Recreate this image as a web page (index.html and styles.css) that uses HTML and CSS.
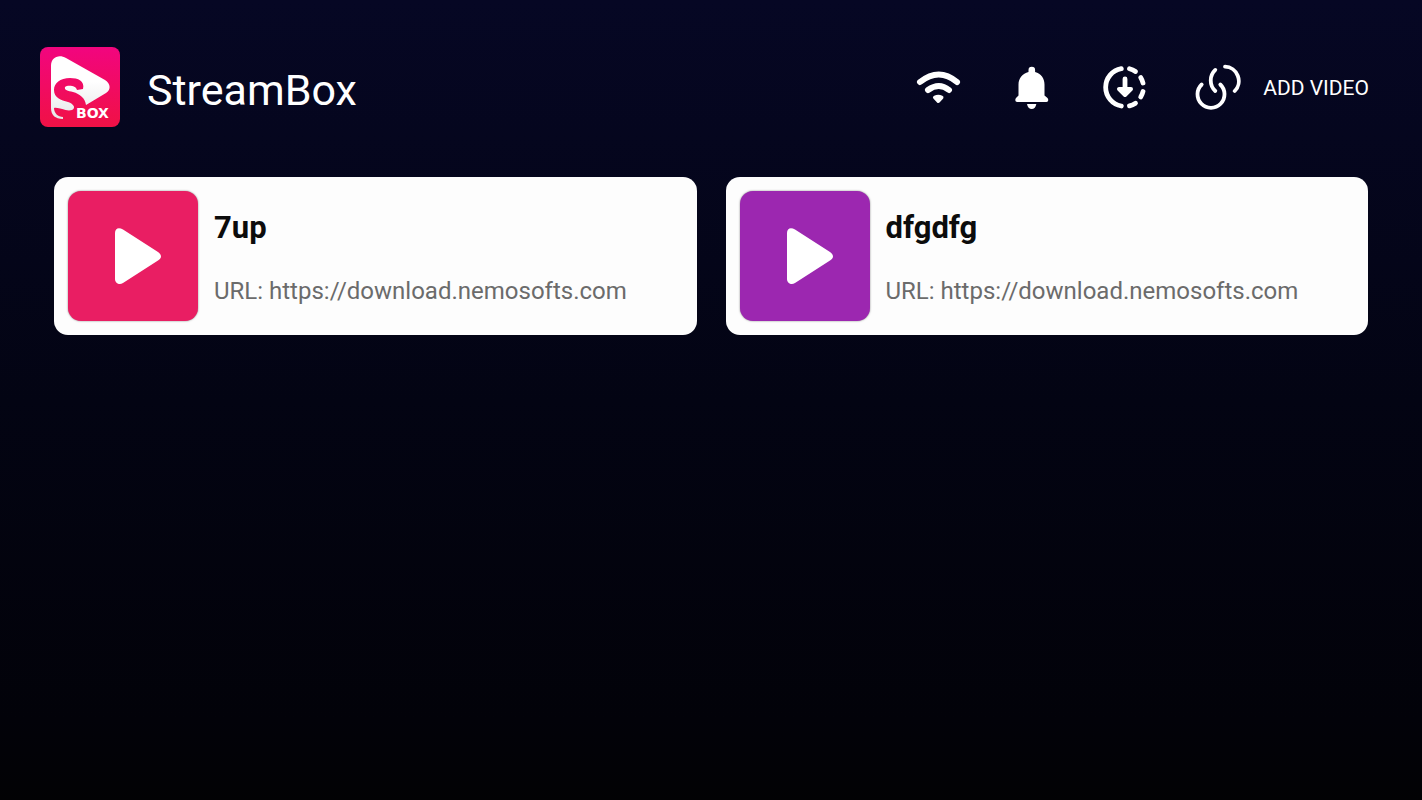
FILE: index.html
```html
<!DOCTYPE html>
<html lang="en">
<head>
    <meta charset="UTF-8">
    <meta name="viewport" content="width=device-width, initial-scale=1.0">
    <title>StreamBox</title>
    <link rel="stylesheet" href="styles.css">
</head>
<body>
    <header class="header">
        <div class="brand">
            <svg class="logo" viewBox="0 0 80 80" aria-hidden="true">
                <defs>
                    <linearGradient id="logo-bg" x1="0" y1="0" x2="0" y2="1">
                        <stop offset="0" stop-color="#f2057f"/>
                        <stop offset="1" stop-color="#f01145"/>
                    </linearGradient>
                    <linearGradient id="logo-play" x1="0" y1="0" x2="0" y2="1">
                        <stop offset="0.4" stop-color="#ffffff"/>
                        <stop offset="1" stop-color="#e6e6e8"/>
                    </linearGradient>
                </defs>
                <rect width="80" height="80" rx="8" fill="url(#logo-bg)"/>
                <path fill="url(#logo-play)" d="M11 19 C11 10 19 7 26 11 L65 33 C71 37 71 43 66 46 L46 58 C45 51 40 47 33 45 C28 44 24 43 25 40 C27 38 36 38 37 43 L43 42 C45 34 38 31 30 31 C20 31 14 36 14 43 C14 51 21 53 28 55 C34 57 36 61 32 63 C26 65 20 60 14 61 C14 66 18 70 23 70 L23 72 C15 72 11 68 11 61 Z"/>
                <text class="logo-text" x="36" y="71">BOX</text>
            </svg>
            <h1 class="title">StreamBox</h1>
        </div>

        <nav class="actions">
            <button class="action" type="button" aria-label="Network">
                <svg class="icon" viewBox="0 0 46 46" fill="none" stroke="#fff" stroke-width="6" stroke-linecap="round">
                    <path d="M4 18 Q23 3 41 18"/>
                    <path d="M12 26 Q23 18 33 26"/>
                    <path d="M19 33.500 Q22.300 32 25.500 33.500 L22.300 37 Z" fill="#fff" stroke-width="4" stroke-linejoin="round"/>
                </svg>
            </button>
            <button class="action" type="button" aria-label="Notifications">
                <svg class="icon" viewBox="0 0 46 46" fill="#fff">
                    <path d="M19.500 8 V6 a3.300 3.300 0 0 1 6.600 0 V8 C32 9.500 35.500 14.500 35.500 20.500 V31.500 L38.500 34 C40 36 39 38 37.500 38 H8.200 C6.500 38 5.600 36 7 34 L9.500 31.500 V20.500 C9.500 14.500 13.500 9.500 19.500 8 Z"/>
                    <path d="M18 40 H27.300 C27 43 25 45 22.700 45 C20.400 45 18.400 43 18 40 Z"/>
                </svg>
            </button>
            <button class="action" type="button" aria-label="Downloads">
                <svg class="icon" viewBox="0 0 46 46" fill="none" stroke="#fff" stroke-width="4.800" stroke-linecap="round">
                    <path d="M19.300 4.600 A19 19 0 0 0 19.300 42"/>
                    <path d="M27.500 4.700 A19 19 0 0 1 33.500 7.500"/>
                    <path d="M38.700 13.500 A19 19 0 0 1 41 19"/>
                    <path d="M41 27.500 A19 19 0 0 1 38.700 33"/>
                    <path d="M33.500 39.200 A19 19 0 0 1 27.500 41.900"/>
                    <path d="M23 15 V25"/>
                    <path d="M17 25 H29 L23 31 Z" fill="#fff" stroke-width="4" stroke-linejoin="round"/>
                </svg>
            </button>
            <button class="action" type="button">
                <svg class="icon" viewBox="0 0 46 46" fill="none" stroke="#fff" stroke-width="3.800" stroke-linecap="round">
                    <path d="M6.700 20.500 A13.500 13.500 0 1 0 25.300 20.500"/>
                    <path d="M20.300 5.900 A14.500 14.500 0 0 0 20.300 27"/>
                    <path d="M30 2.700 A14.300 14.300 0 0 1 39.700 27"/>
                </svg>
                <span class="action-label">ADD VIDEO</span>
            </button>
        </nav>
    </header>

    <main class="playlist">
        <a class="card" href="#">
            <span class="thumb thumb-pink">
                <svg class="play" viewBox="0 0 46 56" aria-hidden="true">
                    <path d="M0 5 C0 0 4 -1 8 1.500 L43 24 C47 27 47 30 43 32.500 L8 55 C4 57.500 0 55 0 51 Z"/>
                </svg>
            </span>
            <span class="info">
                <strong class="name">7up</strong>
                <span class="url">URL: https://download.nemosofts.com</span>
            </span>
        </a>
        <a class="card" href="#">
            <span class="thumb thumb-purple">
                <svg class="play" viewBox="0 0 46 56" aria-hidden="true">
                    <path d="M0 5 C0 0 4 -1 8 1.500 L43 24 C47 27 47 30 43 32.500 L8 55 C4 57.500 0 55 0 51 Z"/>
                </svg>
            </span>
            <span class="info">
                <strong class="name">dfgdfg</strong>
                <span class="url">URL: https://download.nemosofts.com</span>
            </span>
        </a>
    </main>
</body>
</html>
```
FILE: styles.css
```css
* {
    margin: 0;
    padding: 0;
    box-sizing: border-box;
}

body {
    min-height: 100vh;
    font-family: Roboto, "Liberation Sans", sans-serif;
    color: #fff;
    background: linear-gradient(#060724, #030413 50%, #020209 90%, #020204);
}

.header {
    display: flex;
    justify-content: space-between;
    align-items: center;
    padding: 47px 53px 0 40px;
}

.brand {
    display: flex;
    align-items: center;
    gap: 27px;
}

.logo {
    width: 80px;
    height: 80px;
}

.logo-text {
    font-family: "DejaVu Sans", sans-serif;
    font-size: 14px;
    font-weight: 700;
    fill: #fff;
}

.title {
    padding-top: 5px;
    font-size: 43px;
    line-height: 52px;
    font-weight: 400;
}

.actions {
    display: flex;
    align-items: center;
    gap: 47px;
}

.action {
    display: flex;
    align-items: center;
    gap: 22px;
    border: none;
    background: none;
    color: inherit;
    font-family: inherit;
    font-size: 21px;
    cursor: pointer;
}

.action-label {
    padding-top: 2px;
}

.icon {
    width: 46px;
    height: 46px;
}

.playlist {
    display: grid;
    grid-template-columns: 1fr 1fr;
    gap: 29px;
    padding: 50px 54px;
}

.card {
    display: flex;
    gap: 16px;
    padding: 14px;
    border-radius: 14px;
    background: #fdfdfd;
    color: #0c0c0c;
    text-decoration: none;
}

.thumb {
    display: flex;
    align-items: center;
    justify-content: center;
    width: 130px;
    height: 130px;
    border-radius: 13px;
    box-shadow: 0 0 2px rgba(0, 0, 0, 0.5);
}

.thumb-pink {
    background: #e91e63;
}

.thumb-purple {
    background: #9c27b0;
}

.play {
    width: 46px;
    height: 56px;
    margin-left: 10px;
    fill: #fff;
}

.info {
    display: flex;
    flex-direction: column;
    padding-top: 19px;
    gap: 31px;
}

.name {
    font-size: 31px;
    line-height: 36px;
    font-weight: 700;
}

.url {
    font-size: 24px;
    line-height: 28px;
    color: #6b6b6b;
}
```
